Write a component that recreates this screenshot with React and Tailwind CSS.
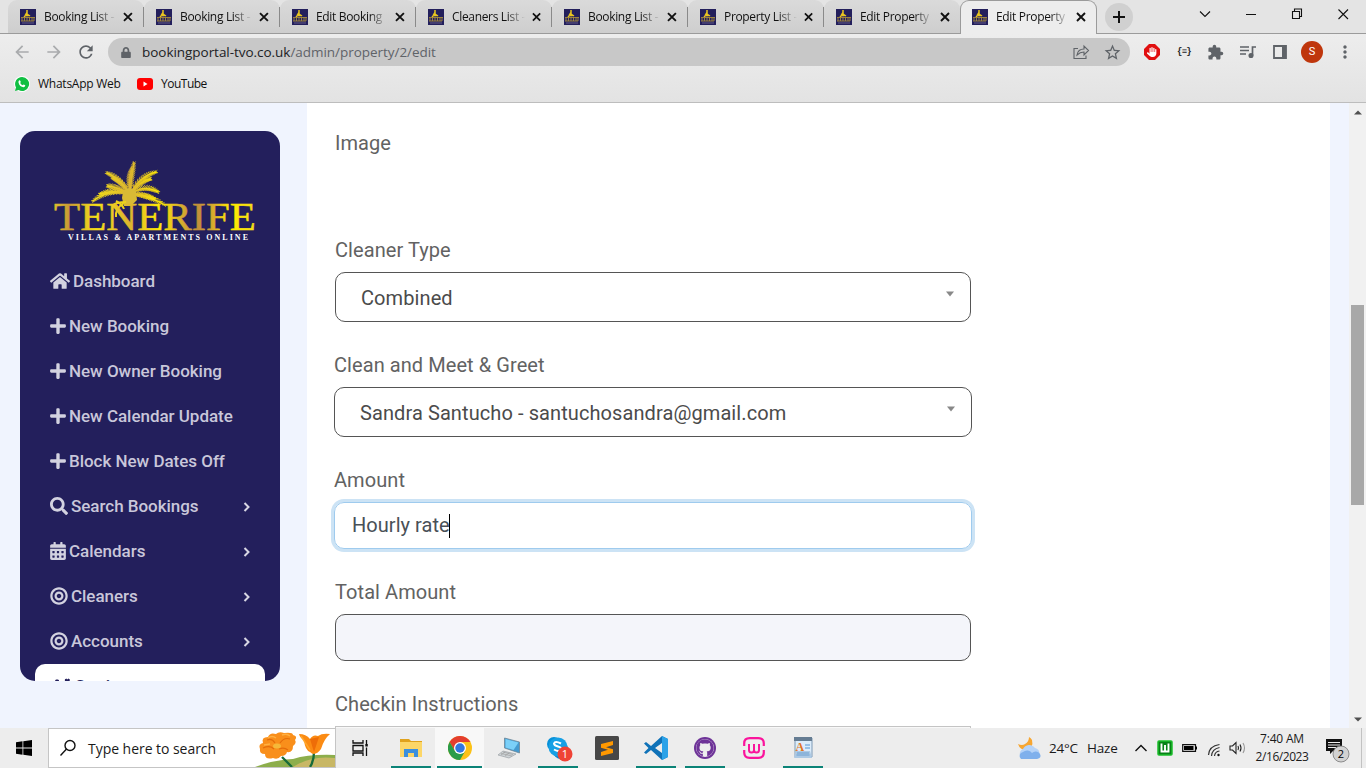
import React from "react";
import { FaHome, FaPlus, FaSearch, FaCalendarAlt, FaBullseye, FaCogs, FaLock } from "react-icons/fa";
import { FaHand, FaGithub } from "react-icons/fa6";
import { MdRefresh, MdArrowBack, MdArrowForward, MdExtension, MdMoreVert, MdStarBorder } from "react-icons/md";

const UI = "font-['Open_Sans','Noto_Sans',sans-serif]";

const TABS = ["Booking List -", "Booking List -", "Edit Booking", "Cleaners List -", "Booking List -", "Property List -", "Edit Property", "Edit Property"];

const MENU = [
  { icon: FaHome, label: "Dashboard", w: "w-5" },
  { icon: FaPlus, label: "New Booking", w: "w-4" },
  { icon: FaPlus, label: "New Owner Booking", w: "w-4" },
  { icon: FaPlus, label: "New Calendar Update", w: "w-4" },
  { icon: FaPlus, label: "Block New Dates Off", w: "w-4" },
  { icon: FaSearch, label: "Search Bookings", more: true, w: "w-[18px]" },
  { icon: FaCalendarAlt, label: "Calendars", more: true, w: "w-4" },
  { icon: FaBullseye, label: "Cleaners", more: true, w: "w-[18px]" },
  { icon: FaBullseye, label: "Accounts", more: true, w: "w-[18px]" },
];

/* Each frond: control point and tip of its rib, measured from the crown at (80, 34). */
const FRONDS = [
  [81, 18, 84, 3],
  [78, 20, 82, 9],
  [70, 18, 57, 13],
  [72, 22, 63, 18],
  [68, 27, 58, 26],
  [60, 28, 43, 41],
  [66, 29, 50, 34],
  [90, 16, 106, 12],
  [92, 20, 100, 19],
  [94, 24, 108, 32],
  [96, 34, 115, 45],
  [92, 34, 104, 39],
];

function Fronds() {
  return (
    <g stroke="url(#gold)" strokeLinecap="round" fill="none">
      {FRONDS.map(([cx, cy, ex, ey]) => {
        const leaves = [];
        for (let t = 0.15; t <= 1; t += 0.075) {
          const u = 1 - t;
          const bx = u * u * 80 + 2 * u * t * cx + t * t * ex;
          const by = u * u * 34 + 2 * u * t * cy + t * t * ey;
          let dx = 2 * u * (cx - 80) + 2 * t * (ex - cx);
          let dy = 2 * u * (cy - 34) + 2 * t * (ey - cy);
          const n = Math.hypot(dx, dy) || 1;
          dx /= n;
          dy /= n;
          const s = 5.2 * Math.sin(Math.PI * (0.2 + 0.68 * t));
          leaves.push(`M${bx} ${by}l${dx * s - dy * s * 0.5} ${dy * s + dx * s * 0.5}M${bx} ${by}l${dx * s + dy * s * 0.5} ${dy * s - dx * s * 0.5}`);
        }
        return (
          <g key={`${ex}-${ey}`}>
            <path d={`M80 34Q${cx} ${cy} ${ex} ${ey}`} strokeWidth="1.4" />
            <path d={leaves.join("")} strokeWidth="0.85" />
          </g>
        );
      })}
    </g>
  );
}

function Logo() {
  return (
    <svg viewBox="0 0 210 84" className="h-[84px] w-[210px]">
      <defs>
        <linearGradient id="gold" x1="0" x2="210" y1="0" y2="0" gradientUnits="userSpaceOnUse">
          <stop offset="0" stopColor="#e6c92a" />
          <stop offset="0.09" stopColor="#c99a35" />
          <stop offset="0.22" stopColor="#f5df18" />
          <stop offset="0.38" stopColor="#dcb42f" />
          <stop offset="0.52" stopColor="#ffea05" />
          <stop offset="0.62" stopColor="#d9b02c" />
          <stop offset="0.7" stopColor="#c08e3a" />
          <stop offset="0.76" stopColor="#d0a033" />
          <stop offset="0.86" stopColor="#ffec00" />
          <stop offset="1" stopColor="#f0d81c" />
        </linearGradient>
      </defs>
      <Fronds />
      <path d="M73 31q7-6 13 0l1 9-6 6-7 0-2-8z" fill="#d9ba35" />
      <path d="M76 42q-9 0-13 3M74 43q-9 5-8 14M66 41q6 3 8 8" stroke="#ecd21b" strokeWidth="2" fill="none" />
      <text x="4" y="69.500" textLength="202" lengthAdjust="spacingAndGlyphs" fill="url(#gold)" stroke="url(#gold)" strokeWidth="0.500" className="font-['Liberation_Serif',serif] text-[39px]">TENERIFE</text>
      <text x="18" y="79.500" textLength="180" lengthAdjust="spacing" fill="#fff" className="font-['Liberation_Serif',serif] text-[8px] font-bold">VILLAS &amp; APARTMENTS ONLINE</text>
    </svg>
  );
}

function Favicon() {
  return (
    <svg viewBox="0 0 16 16" className="h-4 w-4 shrink-0">
      <rect width="16" height="16" fill="#231f5c" />
      <path d="M7 1v4M7 3.500L5.500 6 9 6.500M7 5l-3 3M7 5l3 2" stroke="#e8c521" strokeWidth="1.500" fill="none" />
      <path d="M1 8.500h14M2 9v3M4.500 8v4M7 7v5M9.500 8v4M12 8v4M14 8v4M1 12h13" stroke="#a58a3c" strokeWidth="0.900" />
      <path d="M2 14h12" stroke="#736d92" strokeWidth="0.800" />
    </svg>
  );
}

function Cross({ className }) {
  return (
    <svg viewBox="0 0 10 10" className={className}>
      <path d="M1 1l8 8M9 1l-8 8" stroke="#111" strokeWidth="1.900" />
    </svg>
  );
}

function TabStrip() {
  return (
    <div className="flex h-[34px] shrink-0 bg-[#e4e4e4]">
      <div className="w-2 border-b border-[#9b9b9b]" />
      {TABS.map((t, i) => {
        const active = i === 7;
        return (
          <div
            key={i}
            className={
              active
                ? "flex h-[34px] w-[137px] items-center rounded-t-[9px] border border-b-0 border-[#9b9b9b] bg-[#ededed] pb-[2px] pl-[11px]"
                : "flex w-[136px] items-center rounded-t-[9px] border-b border-[#9b9b9b] bg-linear-to-b from-[#dadada] to-[#cecece] pl-3"
            }
          >
            <Favicon />
            <div className={`${UI} ml-2 w-[73px] text-[12px] leading-4 tracking-[-0.330px] whitespace-nowrap text-[#111] [mask-image:linear-gradient(to_right,#000_74%,transparent)]`}>{t}</div>
            <Cross className="ml-[7px] h-[10px] w-[10px]" />
            {i < 6 && <div className="ml-[10px] h-5 w-px bg-[#8a8a8a]" />}
          </div>
        );
      })}
      <div className="flex flex-1 items-start border-b border-[#9b9b9b]">
        <div className="mt-[3px] ml-2 flex h-7 w-7 items-center justify-center rounded-full bg-[#d0d0d0]">
          <svg viewBox="0 0 12 12" className="h-3 w-3"><path d="M6 0v12M0 6h12" stroke="#111" strokeWidth="2" /></svg>
        </div>
        <svg viewBox="0 0 160 20" className="mt-[4px] ml-[64px] h-5 w-[160px]" fill="none" stroke="#111" strokeWidth="1.100">
          <path d="M3 7.500l5 5 5-5M49 10.500h10" />
          <path d="M95.500 7.500h7v7h-7zM97.500 7v-2h7v7.500h-2" />
          <path d="M141.500 5.500l9.500 9.500M151 5.500l-9.500 9.500" />
        </svg>
      </div>
    </div>
  );
}

function Toolbar() {
  return (
    <div className="flex h-[36px] shrink-0 items-center text-[#5f6368]">
      <MdArrowBack className="ml-3 h-5 w-5 text-[#a9abad]" />
      <MdArrowForward className="ml-3 h-5 w-5 text-[#a9abad]" />
      <MdRefresh className="ml-3 h-5 w-5" />
      <div className="ml-3 flex h-7 w-[1022px] items-center rounded-full bg-[#c8c8c8]">
        <FaLock className="ml-3 h-[11px] w-3" />
        <div className={`${UI} ml-[10px] flex-1 text-[13.500px] leading-5 tracking-[-0.040px]`}>
          <span className="text-[#202124]">bookingportal-tvo.co.uk</span>/admin/property/2/edit
        </div>
        <svg viewBox="0 0 18 16" className="h-4 w-[18px]" fill="none" stroke="#5f6368" strokeWidth="1.100">
          <path d="M5 4.500H1v10h12v-3M4 11q1-6 7-6V2l4.500 4.500L11 11V8q-4 0-7 3z" />
        </svg>
        <MdStarBorder className="mr-2 ml-[12px] h-[19px] w-[19px]" />
      </div>
      <div className="ml-[14px] grid h-4 w-4 place-items-center">
        <svg viewBox="0 0 16 16" className="col-start-1 row-start-1 h-4 w-4"><path d="M5 0h6l5 5v6l-5 5H5l-5-5V5z" fill="#e10f10" /></svg>
        <FaHand className="col-start-1 row-start-1 h-[10px] w-[10px] text-white" />
      </div>
      <div className="ml-[16px] w-[16px] text-center font-['Liberation_Mono',monospace] text-[9px] leading-4 font-bold tracking-[-0.800px] text-[#222]">{"{≡}"}</div>
      <MdExtension className="ml-[15px] h-[17px] w-[17px]" />
      <svg viewBox="0 0 16 14" className="ml-[16px] h-[14px] w-4" fill="none" stroke="#5f6368" strokeWidth="1.700"><path d="M0 2h9M0 5.500h9M0 9h6M12.500 10.500V2H16" /><circle cx="11" cy="10.500" r="1.700" fill="#5f6368" /></svg>
      <svg viewBox="0 0 14 14" className="ml-[17px] h-[14px] w-[14px]"><path d="M1 1h12v12H1z" fill="none" stroke="#5f6368" strokeWidth="1.800" /><path d="M9 1h4v12H9z" fill="#5f6368" /></svg>
      <div className="ml-[14px] flex h-[22px] w-[22px] items-center justify-center rounded-full bg-[#bf360c] font-['Roboto',sans-serif] text-[11px] text-white">S</div>
      <MdMoreVert className="ml-[12px] h-[20px] w-[20px]" />
    </div>
  );
}

function Bookmarks() {
  return (
    <div className={`${UI} flex h-7 items-center text-[12px] leading-4 text-[#111]`}>
      <svg viewBox="0 0 16 16" className="ml-[14px] h-4 w-4"><circle cx="8" cy="8" r="8" fill="#fff" /><path d="M8 1a7 7 0 1 1-3.500 13L1 15l1-3.500A7 7 0 0 1 8 1z" fill="#10bf42" /><path d="M5 4.500q.8-.5 1.300.3l.5 1.200-.6 1q1 1.700 2.500 2.300l.9-.9 1.700.9q0 1.600-1.600 1.900Q5.500 11 4.500 6.500q-.1-1.300.5-2z" fill="#fff" /></svg>
      <span className="ml-2 w-[83px] tracking-[-0.250px] whitespace-nowrap">WhatsApp Web</span>
      <svg viewBox="0 0 16 12" className="ml-4 h-3 w-4"><rect width="16" height="12" rx="3" fill="#f00" /><path d="M6.500 3.500v5l4-2.500z" fill="#fff" /></svg>
      <span className="ml-2 tracking-[-0.500px]">YouTube</span>
    </div>
  );
}

function Sidebar() {
  return (
    <div className="flex w-[307px] shrink-0 bg-[#f0f4fe] pt-7 pl-5">
      <div className="h-[550px] w-[260px] overflow-hidden rounded-[15px] bg-[#231f5c]">
        <div className="pt-[29px] pl-[30px]"><Logo /></div>
        <div className="mt-[15px] flex flex-col">
          {MENU.map(({ icon: Icon, label, more, w }) => (
            <div key={label} className="flex h-[45px] items-center pr-[29px] pb-px pl-[29.500px] font-['Roboto',sans-serif] text-[17px] font-medium tracking-[-0.030px] text-[#c9c7da]">
              <Icon className={`${w} h-[18px] shrink-0 text-[#d3d2e0]`} />
              <span className="mt-px ml-[3.500px] flex-1 whitespace-nowrap">{label}</span>
              {more && <svg viewBox="0 0 8 10" className="mt-px h-[10px] w-2"><path d="M1.500 1l4 4-4 4" fill="none" stroke="#d8d6e4" strokeWidth="2" /></svg>}
            </div>
          ))}
          <div className="mx-[15px] flex h-[45px] items-center rounded-t-[10px] bg-white pl-[15px] font-['Roboto',sans-serif] text-[17px] font-medium text-[#231f5c]">
            <FaCogs className="h-[18px] w-[21px]" />
            <span className="mt-px ml-1">Settings</span>
          </div>
        </div>
      </div>
    </div>
  );
}

function Label({ children, className = "" }) {
  return <div className={`h-6 shrink-0 text-[20px] leading-6 tracking-[0.070px] text-[#626262] ${className}`}>{children}</div>;
}

function Select({ value, className }) {
  return (
    <div className={`flex h-[50px] shrink-0 items-center rounded-[10px] border border-[#555] pr-[15px] pl-[25px] text-[20px] tracking-[0.090px] text-[#4b4b4b] ${className}`}>
      <span className="mt-[2px] flex-1">{value}</span>
      <svg viewBox="0 0 10 6" className="mb-[7px] h-[6px] w-[10px]"><path d="M1 .5h8L5 5.500z" fill="#888" /></svg>
    </div>
  );
}

function Form() {
  return (
    <div className="flex w-[1023px] flex-col overflow-hidden bg-white pl-7 font-['Roboto',sans-serif]">
      <Label className="mt-7">Image</Label>
      <Label className="mt-[83px]">Cleaner Type</Label>
      <Select value="Combined" className="mt-[10px] w-[636px]" />
      <Label className="mt-[31px] -ml-px">Clean and Meet &amp; Greet</Label>
      <Select value="Sandra Santucho - santuchosandra@gmail.com" className="mt-[10px] -ml-px w-[638px]" />
      <Label className="mt-[31px] -ml-px">Amount</Label>
      <div className="mt-[10px] -ml-px flex h-[47px] w-[638px] shrink-0 items-center rounded-[10px] border border-[#9fcbee] pl-[17px] text-[20px] tracking-[0.040px] text-[#495057] shadow-[0_0_0_3px_#cce3f5]">
        <span className="-mt-px">Hourly rate</span><span className="-ml-px h-6 w-px bg-black" />
      </div>
      <Label className="mt-[31px]">Total Amount</Label>
      <div className="mt-[10px] h-[47px] w-[636px] shrink-0 rounded-[10px] border border-[#555] bg-[#f4f5fa]" />
      <Label className="mt-[31px]">Checkin Instructions</Label>
      <div className="mt-[10px] h-10 w-[636px] shrink-0 border border-[#c4c4c4] bg-[#f8f8f8]" />
    </div>
  );
}

function Scrollbar() {
  return (
    <div className="flex w-[17px] flex-col items-center justify-between bg-[#f1f1f1] pt-[7px] pb-[6px]">
      <svg viewBox="0 0 8 5" className="h-[5px] w-2"><path d="M0 4.500h8L4 .5z" fill="#505050" /></svg>
      <div className="mt-[190px] mb-auto h-[200px] w-[13px] bg-[#a8a8a8]" />
      <svg viewBox="0 0 8 5" className="h-[5px] w-2"><path d="M0 .5h8L4 4.500z" fill="#505050" /></svg>
    </div>
  );
}

function Poppies() {
  return (
    <svg viewBox="0 0 80 38" className="h-[38px] w-20">
      <path d="M0 38q18-7 38-8 16-5 42-4v12z" fill="#8dae4c" />
      <path d="M38 38q18-12 42-9v9z" fill="#c8b765" />
      <path d="M27 28l10 10M59 23q0 9-4 15" stroke="#176b3a" strokeWidth="2.300" fill="none" />
      <path d="M5 20q-2-5 3-6-2-6 5-6 2-5 8-3 3-3 8-1 9-1 9 2 5 1 2 5 2 3-2 6 0 7-6 6-1 4-6 4-3 4-8 2-8 2-8-4-6 0-5-5z" fill="#f98f1b" />
      <path d="M12 11q5-2 8 3M25 14q4-6 10-4M8 19q7-3 11 1M24 20q5-2 9 1" stroke="#e46d0a" strokeWidth="1.200" fill="none" />
      <path d="M13 9q4-3 8 0M27 6q5-2 8 1M9 16l6-1" stroke="#ffb042" strokeWidth="1.500" fill="none" />
      <ellipse cx="22" cy="17" rx="4" ry="2.500" fill="#f5b839" />
      <path d="M44 5q7 0 11 5 3-5 8-3 4-3 12-2-6 5-9 15-6 8-11 3-5-2-6-12-4-2-5-6z" fill="#fb8b13" />
      <path d="M55 10l4 13 5-15z" fill="#ee6d08" />
      <path d="M46 7l9 14" stroke="#ffa62b" strokeWidth="1.500" />
    </svg>
  );
}

function TaskButton({ children, line, active, width = "w-10" }) {
  return (
    <div className={`flex h-10 w-[49px] flex-col items-center ${active ? "bg-[#f8f8f8]" : ""}`}>
      <div className="flex h-[38px] items-center justify-center pt-[2px]">{children}</div>
      {line && <div className={`h-[2px] bg-[#0b8377] ${width}`} />}
    </div>
  );
}

function Taskbar() {
  return (
    <div className={`${UI} flex h-10 shrink-0 bg-[#ededed] text-[#1a1a1a]`}>
      <div className="flex w-12 items-center justify-center">
        <svg viewBox="0 0 16 16" className="h-4 w-4"><path d="M0 2.300l6.500-1v6.200H0zM7.300 1.200L16 0v7.500H7.300zM0 8.400h6.500v6.300l-6.500-.9zM7.300 8.400H16V16l-8.700-1.200z" /></svg>
      </div>
      <div className="flex w-[288px] items-center overflow-hidden border border-[#c5c5c5] bg-white pl-[10px]">
        <svg viewBox="0 0 18 18" className="h-[18px] w-[18px]" fill="none" stroke="#111" strokeWidth="1.400"><circle cx="11" cy="6.500" r="5" /><path d="M7.500 10L1.500 16.500" /></svg>
        <span className="ml-[11px] flex-1 text-[14px] tracking-[-0.040px] whitespace-nowrap">Type here to search</span>
        <Poppies />
      </div>
      <div className="flex w-12 items-center justify-center">
        <svg viewBox="0 0 18 16" className="h-4 w-[18px]" fill="none" stroke="#111" strokeWidth="1.300"><path d="M2 0v3h10V0M2 16v-3h10v3M2 5.500h10v5.500H2zM15.500 0v4M15.500 7.500V16" /><path d="M14.300 4h2.500v2.500h-2.500z" fill="#111" stroke="none" /></svg>
      </div>
      <div className="ml-[2px] flex">
        <TaskButton line>
          <svg viewBox="0 0 22 19" className="h-[19px] w-[22px]"><path d="M0 0h9l2 2h11v6H0z" fill="#e0a21c" /><path d="M0 3h22v15H0z" fill="#fcd667" /><path d="M4 18v-8h14v8h-4v-4H8v4z" fill="#3b8fdd" /></svg>
        </TaskButton>
        <TaskButton line active width="w-[45px]">
          <svg viewBox="0 0 48 48" className="h-6 w-6"><circle cx="24" cy="24" r="24" fill="#fbc116" /><path d="M3.200 12A24 24 0 0 1 44.800 12H24L14 30z" fill="#e43e2f" /><path d="M3.200 12A24 24 0 0 0 24 48l10.400-18L24 36 14 30z" fill="#2b9c49" /><circle cx="24" cy="24" r="12" fill="#fff" /><circle cx="24" cy="24" r="9.500" fill="#3277e0" /></svg>
        </TaskButton>
        <TaskButton>
          <svg viewBox="0 0 24 22" className="h-[22px] w-6"><path d="M7.500 1l15 4v11l-15-5z" fill="#459bd0" stroke="#6c8798" strokeWidth=".8" /><path d="M8.500 2l13 3.500-5 7.500-8-2.500z" fill="#7bd0f8" /><path d="M6 14l13 3-7 4-11-3z" fill="#ced3d6" stroke="#9ba1a5" strokeWidth=".7" /><path d="M4 16.500l11 2.500M6 15l10 2.500M8 15l-4 3M12 16l-4 3" stroke="#999" strokeWidth=".6" /></svg>
        </TaskButton>
        <TaskButton line>
          <div className="-mr-1 pt-[2px]">
            <svg viewBox="0 0 27 26" className="h-[26px] w-[27px]"><circle cx="8" cy="8" r="7" fill="#0690d9" /><circle cx="15" cy="15" r="8" fill="#0b83ce" /><circle cx="12" cy="11" r="9.500" fill="#17a0e5" /><path d="M15 7.500q-6-3-7 0 0 2 4 3 4 1 3 3-2 3-7 0" fill="none" stroke="#fff" strokeWidth="2" /><circle cx="19" cy="18" r="7.500" fill="#ef4335" /><text x="19" y="22" textAnchor="middle" fill="#fff" className="font-['Open_Sans',sans-serif] text-[11px]">1</text></svg>
          </div>
        </TaskButton>
        <TaskButton>
          <svg viewBox="0 0 24 24" className="h-6 w-6"><rect width="24" height="24" rx="1.500" fill="#474747" /><path d="M18 5v4l-7 2.200 7 2V17L6 20v-4l7-2.200-7-2.100V8z" fill="#ff9800" /></svg>
        </TaskButton>
        <TaskButton line>
          <svg viewBox="0 0 24 24" className="h-6 w-6"><path d="M18 0l6 3v18l-6 3L7 14l-5 4-2-1.500L4.500 12 0 7.500 2 6l5 4zM18 7l-7 5 7 5z" fill="#0f72b8" fillRule="evenodd" /><path d="M18 0l6 3v18l-6 3z" fill="#2ba2e8" /></svg>
        </TaskButton>
        <TaskButton line>
          <div className="flex h-[22px] w-[22px] items-center justify-center rounded-full bg-[#6e3398]"><div className="flex h-[18px] w-[18px] items-center justify-center rounded-full bg-[#eee]"><FaGithub className="h-[18px] w-[18px] text-[#6e3398]" /></div></div>
        </TaskButton>
        <TaskButton>
          <svg viewBox="0 0 22 22" className="h-[22px] w-[22px]" fill="none" stroke="#fa149c" strokeWidth="2.200"><path d="M1.200 9V6.500q0-5.300 5.500-5.300h8.600q5.500 0 5.500 5.300V9M1.200 13v2.500q0 5.300 5.500 5.300h8.600q5.500 0 5.500-5.300V13" /><path d="M6 7v6q0 2.500 2.500 2.500T11 13V7v6q0 2.500 2.500 2.500T16 13V7" strokeWidth="2" /></svg>
        </TaskButton>
        <TaskButton line>
          <svg viewBox="0 0 20 22" className="h-[22px] w-5"><path d="M2 1h17v19H2z" fill="#dcecfa" stroke="#7d99b5" /><path d="M1 0h18v4H1z" fill="#657c92" /><path d="M12 8h5M12 11h5" stroke="#5694d2" /><text x="2.500" y="13.500" fill="#e2741f" className="font-['Liberation_Serif',serif] text-[12px] font-bold">A</text><path d="M3 14h14l2 7H1z" fill="#acc9e4" /><path d="M4 16h12M3.500 18h13" stroke="#6fa0d0" /></svg>
        </TaskButton>
      </div>
      <div className="flex flex-1 items-center justify-end">
        <svg viewBox="0 0 25 24" className="h-6 w-[25px]"><path d="M12 1q0 5-4 7-3 2-7 0 2 6 8 6 8-2 6-10-1-2-3-3z" fill="#f7a631" /><path d="M6 23a5.500 5.500 0 0 1 0-10 7 7 0 0 1 12-1 5.800 5.800 0 0 1 1 11z" fill="#b5d3f8" /><path d="M4 23a4 4 0 0 1 2-7 6 6 0 0 1 9 1 5 5 0 0 1 8 1q2 4-3 5z" fill="#7fb0ec" /></svg>
        <span className="ml-[7px] w-[30px] text-[13.500px] tracking-[-0.200px]">24°C</span>
        <span className="ml-2 w-[31px] text-[13.500px] tracking-[-0.200px]">Haze</span>
        <svg viewBox="0 0 12 8" className="ml-[17px] h-2 w-3"><path d="M.5 7L6 1.500 11.500 7" fill="none" stroke="#111" strokeWidth="1.400" /></svg>
        <svg viewBox="0 0 16 16" className="ml-[10px] h-4 w-4"><rect x="1" y="1" width="14" height="14" rx="1" fill="#078216" stroke="#1bbf2b" strokeWidth="1.500" /><path d="M4.500 3.500v8h7v-8M8 5v6" stroke="#fff" strokeWidth="1.900" fill="none" /></svg>
        <svg viewBox="0 0 15 8" className="ml-[9px] h-2 w-[15px]"><path d="M.7.700h12.800v6.600H.7z" fill="none" stroke="#111" strokeWidth="1.200" /><path d="M2 2h9.500v4H2zM13 2.500h2v3h-2z" /></svg>
        <svg viewBox="0 0 14 14" className="mt-[3px] ml-[10px] h-[14px] w-[14px]" fill="none" stroke="#333" strokeWidth="1.200"><path d="M1.500 12Q2 3 12.500 1.500M4.500 13Q5 6 12.500 4.500M7.500 13Q8 8.500 12.500 8" /><circle cx="11.500" cy="12" r="1.200" fill="#111" stroke="none" /></svg>
        <svg viewBox="0 0 18 14" className="ml-[8px] h-[14px] w-[18px]" fill="none" stroke="#222" strokeWidth="1.100"><path d="M1 5h2.500L7 1.500v11L3.500 9H1z" /><path d="M9 5q1 2 0 4M11 3.500q2 3.500 0 7" /><path d="M14 2q3 5 0 10" stroke="#999" /></svg>
        <div className="ml-[7px] w-[56px] pb-px text-center text-[12px] leading-[18px] tracking-[-0.450px] whitespace-nowrap">
          <div className="tracking-[-0.200px]">7:40 AM</div><div>2/16/2023</div>
        </div>
        <svg viewBox="0 0 25 26" className="mt-[5px] ml-[15px] h-[26px] w-[25px]"><path d="M1 1h16v12H8l-3 3v-3H1z" fill="#111" /><path d="M3 4.500h12M3 7h12M3 9.500h8" stroke="#eee" strokeWidth="1" /><circle cx="16" cy="16" r="8" fill="#d2d2d2" stroke="#777" strokeWidth=".8" /><text x="16" y="20" textAnchor="middle" className="font-['Open_Sans',sans-serif] text-[11px]">2</text></svg>
        <div className="ml-[11px] h-10 w-px bg-[#c2c2c2]" />
        <div className="w-[4px]" />
      </div>
    </div>
  );
}

export default function App() {
  return (
    <div className="flex h-[768px] w-[1366px] flex-col overflow-hidden">
      <TabStrip />
      <div className="flex h-[69px] shrink-0 flex-col border-b border-[#bdbdbd] bg-linear-to-b from-[#ededed] to-[#e3e3e3]">
        <Toolbar />
        <Bookmarks />
      </div>
      <div className="flex h-[625px] shrink-0 overflow-hidden">
        <Sidebar />
        <Form />
        <div className="flex-1 bg-[#f0f4fe]" />
        <Scrollbar />
      </div>
      <Taskbar />
    </div>
  );
}
